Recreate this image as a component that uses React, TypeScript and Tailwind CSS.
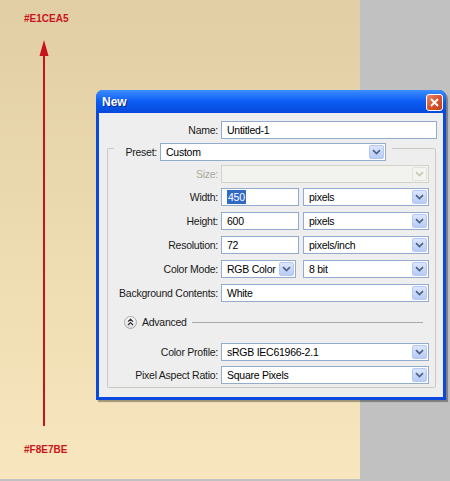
import type { ReactNode } from 'react';

const font = { fontFamily: '"Liberation Sans", Arial, sans-serif' };

function Chevron({ disabled }: { disabled?: boolean }) {
  return (
    <div
      className={
        disabled
          ? 'w-[15px] h-[14px] mr-[1px] rounded-[2px] border border-[#e2e2dc] bg-[#f4f4f0] flex items-center justify-center'
          : 'w-[15px] h-[14px] mr-[1px] rounded-[2px] border border-[#b4c8f4] bg-gradient-to-b from-[#dce6fd] to-[#b7cbf6] flex items-center justify-center'
      }>
      <svg width="9" height="6" viewBox="0 0 9 6">
        <path
          d="M1 1.2 4.5 4.6 8 1.2"
          fill="none"
          stroke={disabled ? '#c9c7ba' : '#4d6185'}
          strokeWidth="1.7"
        />
      </svg>
    </div>
  );
}

function Select({ value, className, disabled }: { value?: string; className: string; disabled?: boolean }) {
  return (
    <div
      className={
        (disabled ? 'border-[#d5d3c8] bg-[#f2f2ee] ' : 'border-[#93abcc] bg-white ') +
        'h-[18px] border flex items-center pl-[5px] ' +
        className
      }>
      <span className="flex-1 text-black">{value}</span>
      <Chevron disabled={disabled} />
    </div>
  );
}

function Field({ children, className }: { children: ReactNode; className: string }) {
  return (
    <div className={'h-[18px] border border-[#93abcc] bg-white flex items-center pl-[5px] text-black ' + className}>
      {children}
    </div>
  );
}

function Row({ label, children, dim, className = '' }: { label: string; children: ReactNode; dim?: boolean; className?: string }) {
  return (
    <div className={'flex items-center gap-[3px] ' + className}>
      <div className={'w-[110px] text-right ' + (dim ? 'text-[#aca899]' : 'text-[#1a1a1a]')}>{label}</div>
      {children}
    </div>
  );
}

function Dialog() {
  return (
    <div className="absolute left-[96px] top-[90px] w-[350px] rounded-t-[7px] bg-[#0b48dd] shadow-[2px_2px_1px_rgba(0,0,0,0.35)]">
      {/* title bar */}
      <div className="h-[23px] rounded-t-[7px] bg-gradient-to-b from-[#3d8dff] via-[#0a5cf2] to-[#0749dc] flex items-center pl-[6px] pr-[3px]">
        <span className="flex-1 text-white font-bold text-[12px] [text-shadow:1px_1px_0_#0a2a8a]">New</span>
        <div className="w-[17px] h-[17px] mt-[2px] rounded-[3px] border border-white bg-gradient-to-br from-[#e9866a] via-[#d8522f] to-[#c2401d] flex items-center justify-center">
          <svg width="9" height="9" viewBox="0 0 9 9">
            <path d="M1 1 8 8M8 1 1 8" stroke="#fff" strokeWidth="1.9" />
          </svg>
        </div>
      </div>

      {/* body */}
      <div className="mx-[3px] mb-[3px] bg-[#eeeeee] pt-[8px] pb-[9px] text-[10.5px] leading-[12px] tracking-[-0.25px]">
        <div className="flex items-center gap-[3px]">
          <div className="w-[119px] text-right text-[#1a1a1a]">Name:</div>
          <Field className="w-[216px]">Untitled-1</Field>
        </div>

        <div className="mt-[9px] ml-[8px] w-[329px] border border-[#cacac2] rounded-[2px] pb-[3px]">
          {/* preset legend sits on the border */}
          <div className="-mt-[6px] ml-[6px] w-[278px] bg-[#eeeeee] flex items-center justify-end gap-[3px] pr-[6px]">
            <span className="text-[#1a1a1a]">Preset:</span>
            <Select value="Custom" className="w-[226px]" />
          </div>

          <Row label="Size:" dim className="mt-[4px]">
            <Select className="w-[208px]" disabled />
          </Row>
          <Row label="Width:" className="mt-[5px]">
            <Field className="w-[78px] pl-[2px]">
              <span className="bg-[#316ac5] text-white px-[1px] leading-[14px]">450</span>
            </Field>
            <Select value="pixels" className="w-[126px] ml-[1px]" />
          </Row>
          <Row label="Height:" className="mt-[6px]">
            <Field className="w-[78px]">600</Field>
            <Select value="pixels" className="w-[126px] ml-[1px]" />
          </Row>
          <Row label="Resolution:" className="mt-[6px]">
            <Field className="w-[78px]">72</Field>
            <Select value="pixels/inch" className="w-[126px] ml-[1px]" />
          </Row>
          <Row label="Color Mode:" className="mt-[6px]">
            <Select value="RGB Color" className="w-[75px]" />
            <Select value="8 bit" className="w-[126px] ml-[4px]" />
          </Row>
          <Row label="Background Contents:" className="mt-[6px]">
            <Select value="White" className="w-[208px]" />
          </Row>

          <div className="mt-[12px] h-[16px] flex items-center pl-[16px] pr-[12px]">
            <div className="w-[13px] h-[13px] rounded-full border border-[#a8a8a8] bg-gradient-to-b from-white to-[#dcdcdc] flex items-center justify-center">
              <svg width="7" height="8" viewBox="0 0 7 8">
                <path d="M1 3.6 3.5 1.2 6 3.6M1 7 3.5 4.6 6 7" fill="none" stroke="#333" strokeWidth="1.3" />
              </svg>
            </div>
            <span className="ml-[5px] text-[#1a1a1a]">Advanced</span>
            <div className="flex-1 ml-[5px] h-px bg-[#a9a9a9]" />
          </div>

          <Row label="Color Profile:" className="mt-[13px]">
            <Select value="sRGB IEC61966-2.1" className="w-[208px]" />
          </Row>
          <Row label="Pixel Aspect Ratio:" className="mt-[5px]">
            <Select value="Square Pixels" className="w-[208px]" />
          </Row>
        </div>
      </div>
    </div>
  );
}

export default function App() {
  return (
    <div className="relative w-[450px] h-[481px] overflow-hidden bg-[#c1c1c1]" style={font}>
      <div className="w-[360px] h-[479px] bg-gradient-to-b from-[#E1CEA5] to-[#F8E7BE] flex flex-col pl-[24px] pt-[13px]">
        <span className="text-[10px] leading-[12px] font-bold text-[#c8141b]">#E1CEA5</span>
        <svg className="mt-[15px]" width="40" height="386" viewBox="0 0 40 386">
          <path d="M20 0 24.5 16 15.5 16Z" fill="#c8141b" />
          <rect x="19" y="14" width="2" height="372" fill="#c8141b" />
        </svg>
        <span className="mt-[18px] text-[10px] leading-[12px] font-bold text-[#c8141b]">#F8E7BE</span>
      </div>
      <Dialog />
    </div>
  );
}
